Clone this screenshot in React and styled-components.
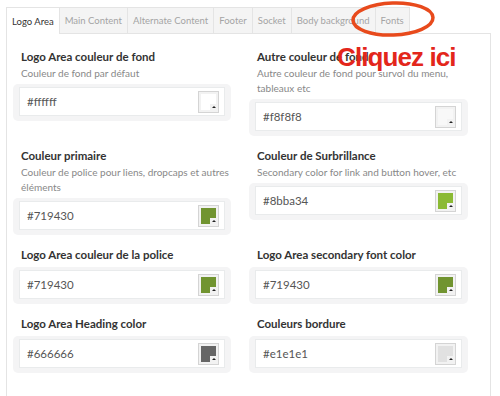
import React from "react";
import styled, { createGlobalStyle } from "styled-components";

const GlobalStyle = createGlobalStyle`
  html, body {
    margin: 0;
    padding: 0;
    background: #fff;
    font-family: Lato, "Open Sans", sans-serif;
  }
`;

const Page = styled.div`
  padding: 7px 0 0 6px;
  width: 485px;
  height: 389px;
  position: relative;
  overflow: hidden;
`;

const TabBar = styled.div`
  display: flex;
  height: 26px;
`;

const Tab = styled.div`
  box-sizing: border-box;
  height: ${props => (props.active ? "27px" : "26px")};
  margin-left: -1px;
  padding: 0 5px;
  display: flex;
  align-items: center;
  font-size: 9.5px;
  color: ${props => (props.active ? "#333" : "#a4a4a4")};
  background: ${props => (props.active ? "#fff" : "#f4f4f4")};
  border: 1px solid #e4e4e4;
  border-bottom: 0;
  position: relative;
  z-index: ${props => (props.active ? 2 : 1)};
  &:first-child {
    margin-left: 0;
  }
`;

const Panel = styled.div`
  box-sizing: border-box;
  height: 370px;
  border: 1px solid #e4e4e4;
  border-bottom: 0;
  padding: 14px 6px;
  display: grid;
  grid-template-columns: 218px 219px;
  column-gap: 18px;
  row-gap: 11px;
  align-content: start;
  align-items: start;
`;

const Field = styled.div`
  display: flex;
  flex-direction: column;
`;

const Label = styled.div`
  padding-left: 8px;
  font-size: 11.5px;
  font-weight: 700;
  line-height: 18px;
  color: #333;
`;

const Desc = styled.div`
  padding-left: 8px;
  font-size: 10px;
  line-height: 15px;
  color: #888;
`;

const InputWrap = styled.div`
  margin-top: 3px;
  padding: 3px 6px 5px;
  background: #f4f4f5;
  border-radius: 5px;
`;

const Input = styled.div`
  box-sizing: border-box;
  height: 29px;
  padding: 0 5px 0 7px;
  background: #fff;
  border: 1px solid #e9ebec;
  display: flex;
  align-items: center;
  justify-content: space-between;
  font-size: 11.5px;
  color: #555;
`;

const Swatch = styled.div`
  box-sizing: border-box;
  width: 21px;
  height: 22px;
  padding: 2px;
  border: 1px solid #d4d4d4;
  background: #f2f2f2;
  position: relative;
`;

const SwatchFill = styled.div`
  width: 100%;
  height: 100%;
  background: ${props => props.color};
`;

const SwatchArrow = styled.div`
  position: absolute;
  right: 1px;
  bottom: 1px;
  width: 7px;
  height: 7px;
  background: #f2f2f2;
  display: flex;
  align-items: center;
  justify-content: center;
  &::after {
    content: "";
    border-left: 2px solid transparent;
    border-right: 2px solid transparent;
    border-bottom: 2px solid #222;
  }
`;

const Callout = styled.div`
  position: absolute;
  left: 337px;
  top: 42px;
  font-family: "Liberation Sans", Arial, sans-serif;
  font-weight: 700;
  font-size: 26px;
  letter-spacing: -0.9px;
  color: #e3261b;
  line-height: 30px;
  z-index: 5;
`;

const Circle = styled.svg`
  position: absolute;
  left: 349px;
  top: 0;
  z-index: 5;
`;

const tabs = [
  "Logo Area",
  "Main Content",
  "Alternate Content",
  "Footer",
  "Socket",
  "Body background",
  "Fonts"
];

const fields = [
  {
    label: "Logo Area couleur de fond",
    desc: "Couleur de fond par défaut",
    value: "#ffffff"
  },
  {
    label: "Autre couleur de fond",
    desc: "Autre couleur de fond pour survol du menu, tableaux etc",
    value: "#f8f8f8"
  },
  {
    label: "Couleur primaire",
    desc: "Couleur de police pour liens, dropcaps et autres éléments",
    value: "#719430"
  },
  {
    label: "Couleur de Surbrillance",
    desc: "Secondary color for link and button hover, etc",
    value: "#8bba34"
  },
  { label: "Logo Area couleur de la police", value: "#719430" },
  { label: "Logo Area secondary font color", value: "#719430" },
  { label: "Logo Area Heading color", value: "#666666" },
  { label: "Couleurs bordure", value: "#e1e1e1" }
];

const ColorField = ({ label, desc, value }) => (
  <Field>
    <Label>{label}</Label>
    {desc && <Desc>{desc}</Desc>}
    <InputWrap>
      <Input>
        {value}
        <Swatch>
          <SwatchFill color={value} />
          <SwatchArrow />
        </Swatch>
      </Input>
    </InputWrap>
  </Field>
);

export default () => (
  <>
    <GlobalStyle />
    <Page>
      <TabBar>
        {tabs.map((t, i) => (
          <Tab key={t} active={i === 0}>
            {t}
          </Tab>
        ))}
      </TabBar>
      <Panel>
        {fields.map(f => (
          <ColorField key={f.label} {...f} />
        ))}
      </Panel>
      <Circle width="90" height="40" viewBox="0 0 90 40">
        <ellipse
          cx="44"
          cy="19"
          rx="40"
          ry="16"
          fill="none"
          stroke="#e84a1c"
          strokeWidth="3.5"
          transform="rotate(-2 44 19)"
        />
      </Circle>
      <Callout>Cliquez ici</Callout>
    </Page>
  </>
);
